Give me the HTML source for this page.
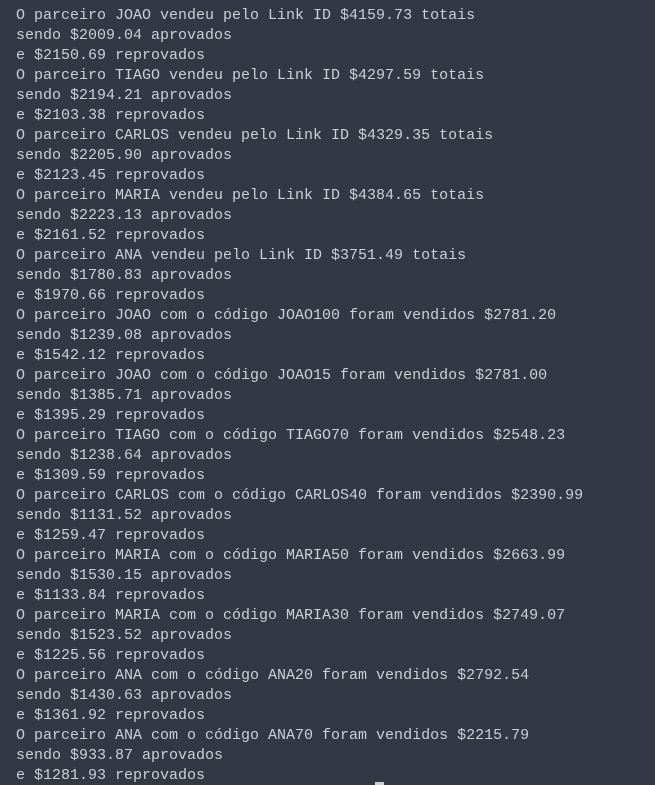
<!DOCTYPE html>
<html><head><meta charset="utf-8"><style>
html,body{margin:0;padding:0;width:655px;height:785px;overflow:hidden;background:#323844;}
pre{margin:0;padding:6px 0 0 16px;font-family:"Liberation Mono","DejaVu Sans Mono",monospace;font-size:15px;line-height:20px;color:#ccd0d6;white-space:pre;}
.cur{position:absolute;left:375px;top:782px;width:9px;height:3px;background:#d0d0d0;}
</style></head><body>
<pre>O parceiro JOAO vendeu pelo Link ID $4159.73 totais
sendo $2009.04 aprovados
e $2150.69 reprovados
O parceiro TIAGO vendeu pelo Link ID $4297.59 totais
sendo $2194.21 aprovados
e $2103.38 reprovados
O parceiro CARLOS vendeu pelo Link ID $4329.35 totais
sendo $2205.90 aprovados
e $2123.45 reprovados
O parceiro MARIA vendeu pelo Link ID $4384.65 totais
sendo $2223.13 aprovados
e $2161.52 reprovados
O parceiro ANA vendeu pelo Link ID $3751.49 totais
sendo $1780.83 aprovados
e $1970.66 reprovados
O parceiro JOAO com o código JOAO100 foram vendidos $2781.20
sendo $1239.08 aprovados
e $1542.12 reprovados
O parceiro JOAO com o código JOAO15 foram vendidos $2781.00
sendo $1385.71 aprovados
e $1395.29 reprovados
O parceiro TIAGO com o código TIAGO70 foram vendidos $2548.23
sendo $1238.64 aprovados
e $1309.59 reprovados
O parceiro CARLOS com o código CARLOS40 foram vendidos $2390.99
sendo $1131.52 aprovados
e $1259.47 reprovados
O parceiro MARIA com o código MARIA50 foram vendidos $2663.99
sendo $1530.15 aprovados
e $1133.84 reprovados
O parceiro MARIA com o código MARIA30 foram vendidos $2749.07
sendo $1523.52 aprovados
e $1225.56 reprovados
O parceiro ANA com o código ANA20 foram vendidos $2792.54
sendo $1430.63 aprovados
e $1361.92 reprovados
O parceiro ANA com o código ANA70 foram vendidos $2215.79
sendo $933.87 aprovados
e $1281.93 reprovados</pre>
<div class="cur"></div>
</body></html>
